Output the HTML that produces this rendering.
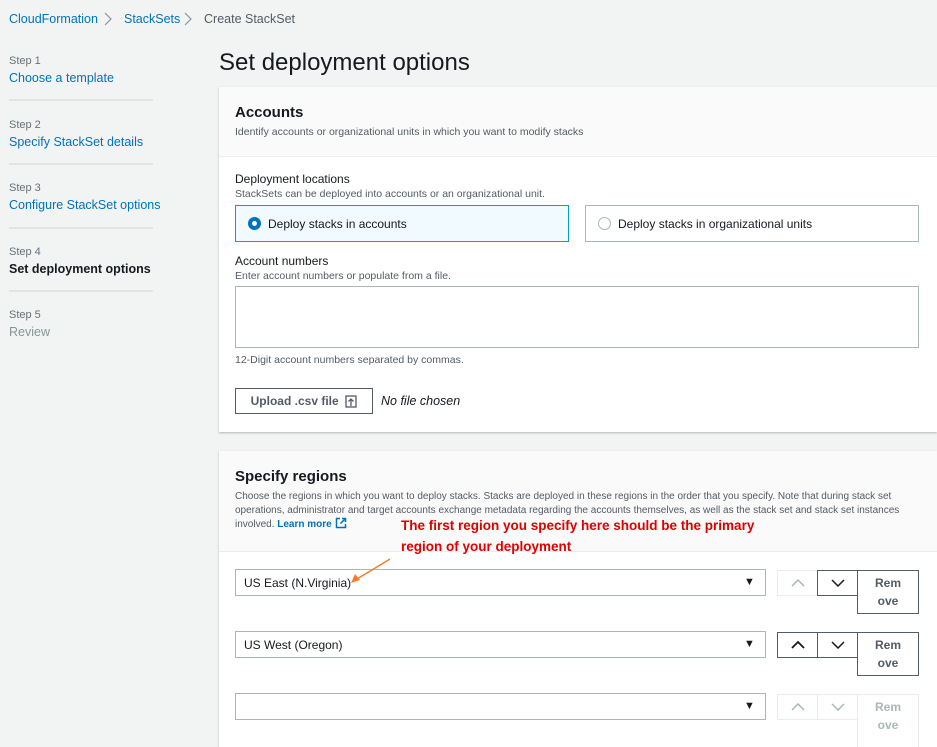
<!DOCTYPE html>
<html><head><style>
*{box-sizing:border-box;margin:0;padding:0}
body{width:937px;height:747px;overflow:hidden;background:#f2f3f3;font-family:"Liberation Sans",sans-serif;color:#16191f;position:relative}
.a{position:absolute;white-space:nowrap}
.link{color:#0073bb}
.small{font-size:10.5px;color:#545b64}
.step{font-size:11px;color:#687078}
.sl{font-size:12.5px}
.hr{position:absolute;left:9px;width:144px;height:2px;background:#e1e4e4}
.panel{position:absolute;left:219px;width:718px;background:#fff;box-shadow:0 1px 2px rgba(0,0,0,.25)}
.ph{position:absolute;left:0;top:0;width:100%;background:#fafafa;border-bottom:1px solid #eaeded}
.box{position:absolute;border:1px solid #aab7b8;background:#fff}
.sel{font-size:12px}
.btn{position:absolute;border:1px solid #545b64;background:#fff;display:flex;align-items:center;justify-content:center}
.dis{border-color:#eaeded}
.rm{font-size:12px;font-weight:bold;color:#545b64;text-align:center;line-height:18px;padding-top:3px;display:block}
.chev{position:absolute;top:12px}
</style></head><body>
<div class="a link" style="left:9px;top:12px;font-size:12.5px">CloudFormation</div>
<svg class="chev" style="left:104px" width="8" height="14"><path d="M1 1l6 6-6 6" fill="none" stroke="#879596" stroke-width="1.2"/></svg>
<div class="a link" style="left:124px;top:12px;font-size:12.5px">StackSets</div>
<svg class="chev" style="left:184px" width="8" height="14"><path d="M1 1l6 6-6 6" fill="none" stroke="#879596" stroke-width="1.2"/></svg>
<div class="a" style="left:204px;top:12px;font-size:12.5px;color:#545b64">Create StackSet</div>

<div class="a step" style="left:9px;top:55px">Step 1</div>
<div class="a link sl" style="left:9px;top:71px">Choose a template</div>
<div class="hr" style="top:99px"></div>
<div class="a step" style="left:9px;top:119px">Step 2</div>
<div class="a link sl" style="left:9px;top:135px">Specify StackSet details</div>
<div class="hr" style="top:163px"></div>
<div class="a step" style="left:9px;top:182px">Step 3</div>
<div class="a link sl" style="left:9px;top:198px">Configure StackSet options</div>
<div class="hr" style="top:227px"></div>
<div class="a step" style="left:9px;top:246px">Step 4</div>
<div class="a sl" style="left:9px;top:262px;font-weight:bold">Set deployment options</div>
<div class="hr" style="top:290px"></div>
<div class="a step" style="left:9px;top:309px">Step 5</div>
<div class="a sl" style="left:9px;top:325px;color:#879596">Review</div>

<div class="a" style="left:219px;top:49px;font-size:24px">Set deployment options</div>

<div class="panel" style="top:87px;height:345px">
 <div class="ph" style="height:70px"></div>
 <div class="a" style="left:16px;top:17px;font-size:15px;font-weight:bold">Accounts</div>
 <div class="a small" style="left:16px;top:39px">Identify accounts or organizational units in which you want to modify stacks</div>
 <div class="a" style="left:16px;top:85px;font-size:12px">Deployment locations</div>
 <div class="a small" style="left:16px;top:101px">StackSets can be deployed into accounts or an organizational unit.</div>
 <div class="box" style="left:16px;top:118px;width:334px;height:37px;border-color:#00a1c9;background:#f1faff"></div>
 <div class="a" style="left:29px;top:130px;width:13px;height:13px;border-radius:50%;border:4px solid #0073bb;background:#fff"></div>
 <div class="a" style="left:49px;top:130px;font-size:12px">Deploy stacks in accounts</div>
 <div class="box" style="left:366px;top:118px;width:334px;height:37px"></div>
 <div class="a" style="left:379px;top:130px;width:13px;height:13px;border-radius:50%;border:1px solid #aab7b8"></div>
 <div class="a" style="left:399px;top:130px;font-size:12px">Deploy stacks in organizational units</div>
 <div class="a" style="left:16px;top:167px;font-size:12px">Account numbers</div>
 <div class="a small" style="left:16px;top:183px">Enter account numbers or populate from a file.</div>
 <div class="box" style="left:16px;top:199px;width:684px;height:62px"></div>
 <div class="a small" style="left:16px;top:267px">12-Digit account numbers separated by commas.</div>
 <div class="btn" style="left:16px;top:301px;width:138px;height:26px;font-size:12px;font-weight:bold;color:#545b64">Upload .csv file&nbsp;&nbsp;<svg width="12" height="13" viewBox="0 0 12 13"><rect x="1" y="1" width="10" height="11" fill="none" stroke="#545b64" stroke-width="1.3"/><path d="M6 11V4M3.5 6.5L6 4l2.5 2.5" fill="none" stroke="#545b64" stroke-width="1.3"/></svg></div>
 <div class="a" style="left:162px;top:307px;font-size:12.5px;font-style:italic">No file chosen</div>
</div>

<div class="panel" style="top:451px;height:296px">
 <div class="ph" style="height:101px"></div>
 <div class="a" style="left:16px;top:17px;font-size:15px;font-weight:bold">Specify regions</div>
 <div class="a small" style="left:16px;top:39px;line-height:13.5px;white-space:normal;width:690px;font-size:10px">Choose the regions in which you want to deploy stacks. Stacks are deployed in these regions in the order that you specify. Note that during stack set operations, administrator and target accounts exchange metadata regarding the accounts themselves, as well as the stack set and stack set instances involved. <b class="link">Learn more</b> <svg width="12" height="12" viewBox="0 0 12 12" style="vertical-align:-2px"><path d="M5 1.5H1.5v9h9V7M7 1.5h3.5V5M10.5 1.5L5.5 6.5" fill="none" stroke="#0073bb" stroke-width="1.5"/></svg></div>
 <div class="a" style="left:182px;top:64px;font-size:13.5px;font-weight:bold;color:#e00000;line-height:21px">The first region you specify here should be the primary<br>region of your deployment</div>
</div>

<div class="box" style="left:235px;top:569px;width:531px;height:27px"></div>
<div class="a sel" style="left:244px;top:576px">US East (N.Virginia)</div>
<div class="box" style="left:235px;top:631px;width:531px;height:27px"></div>
<div class="a sel" style="left:244px;top:638px">US West (Oregon)</div>
<div class="box" style="left:235px;top:693px;width:531px;height:27px"></div>
<div class="a" style="left:744px;top:576px;font-size:11px">▼</div>
<div class="a" style="left:744px;top:638px;font-size:11px">▼</div>
<div class="a" style="left:744px;top:700px;font-size:11px">▼</div>

<svg class="a" style="left:348px;top:557px" width="45" height="30"><path d="M42 2L9 22" stroke="#f08030" stroke-width="1.5"/><path d="M3 26l4-9 5 6z" fill="#f08030"/></svg>

<!-- row1 -->
<div class="btn dis" style="left:777px;top:570px;width:41px;height:26px"><svg width="14" height="8"><path d="M1 7l6-6 6 6" fill="none" stroke="#aab7b8" stroke-width="1.5"/></svg></div>
<div class="btn" style="left:817px;top:570px;width:41px;height:26px"><svg width="14" height="8"><path d="M1 1l6 6 6-6" fill="none" stroke="#16191f" stroke-width="1.5"/></svg></div>
<div class="btn rm" style="left:857px;top:570px;width:62px;height:44px">Rem<br>ove</div>
<!-- row2 -->
<div class="btn" style="left:777px;top:632px;width:41px;height:26px"><svg width="14" height="8"><path d="M1 7l6-6 6 6" fill="none" stroke="#16191f" stroke-width="1.8"/></svg></div>
<div class="btn" style="left:817px;top:632px;width:41px;height:26px"><svg width="14" height="8"><path d="M1 1l6 6 6-6" fill="none" stroke="#16191f" stroke-width="1.5"/></svg></div>
<div class="btn rm" style="left:857px;top:632px;width:62px;height:44px">Rem<br>ove</div>
<!-- row3 -->
<div class="btn dis" style="left:777px;top:694px;width:41px;height:26px"><svg width="14" height="8"><path d="M1 7l6-6 6 6" fill="none" stroke="#aab7b8" stroke-width="1.5"/></svg></div>
<div class="btn dis" style="left:817px;top:694px;width:41px;height:26px"><svg width="14" height="8"><path d="M1 1l6 6 6-6" fill="none" stroke="#aab7b8" stroke-width="1.5"/></svg></div>
<div class="btn rm dis" style="left:857px;top:694px;width:62px;height:53px;color:#aab7b8;border-bottom:none">Rem<br>ove</div>
</body></html>
